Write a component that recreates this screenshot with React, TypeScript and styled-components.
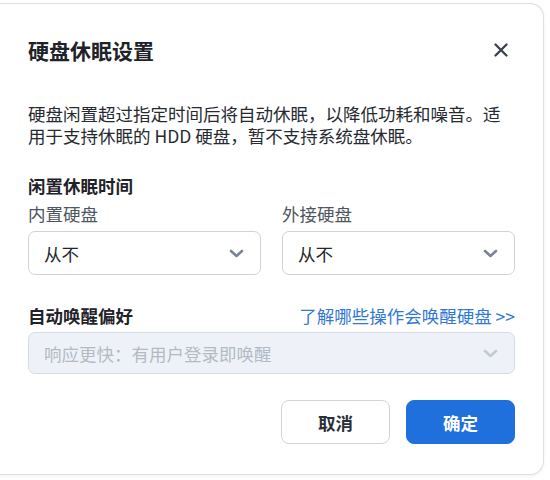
import styled, { createGlobalStyle } from 'styled-components';

const GlobalStyle = createGlobalStyle`
  html, body {
    margin: 0;
    padding: 0;
    background: #ffffff;
  }
  body {
    font-family: "Noto Sans CJK SC", "Noto Sans", "Liberation Sans", sans-serif;
  }
`;

const Page = styled.div`
  width: 550px;
  height: 480px;
  padding-top: 3px;
  box-sizing: border-box;
  overflow: hidden;
`;

const Dialog = styled.section`
  width: 544px;
  height: 472px;
  box-sizing: border-box;
  padding: 32px 28px 30px;
  background: #ffffff;
  border: 1px solid #dddfe3;
  border-left: none;
  border-radius: 0 14px 14px 0;
  box-shadow: 0 1px 4px rgba(0, 0, 0, 0.06);
  display: flex;
  flex-direction: column;
`;

const Header = styled.header`
  display: flex;
  align-items: center;
  justify-content: space-between;
  height: 28px;
`;

const Title = styled.h2`
  margin: 0;
  font-size: 21px;
  line-height: 28px;
  font-weight: 700;
  color: #1f2329;
`;

const CloseButton = styled.button`
  border: none;
  background: none;
  padding: 0;
  margin-right: 6px;
  width: 16px;
  height: 16px;
  display: flex;
  align-items: center;
  justify-content: center;
  cursor: pointer;
`;

const Description = styled.p`
  margin: 39px 0 0;
  font-size: 17.5px;
  line-height: 22px;
  color: #262a30;
`;

const SectionHead = styled.div<{ $gap: number }>`
  margin-top: ${({ $gap }) => $gap}px;
  display: flex;
  align-items: center;
  justify-content: space-between;
  height: 22px;
`;

const SectionLabel = styled.span`
  font-size: 17.5px;
  line-height: 22px;
  font-weight: 700;
  color: #1f2329;
`;

const HelpLink = styled.a`
  font-size: 17.5px;
  line-height: 22px;
  color: #3178d4;
  text-decoration: none;
  cursor: pointer;
`;

const Columns = styled.div`
  margin-top: 6px;
  display: grid;
  grid-template-columns: 1fr 1fr;
  column-gap: 21px;
`;

const Field = styled.div`
  display: flex;
  flex-direction: column;
  gap: 6px;
`;

const FieldLabel = styled.span`
  font-size: 17.5px;
  line-height: 22px;
  color: #4e5560;
`;

const Select = styled.div<{ $disabled?: boolean; $top?: number }>`
  margin-top: ${({ $top }) => $top ?? 0}px;
  height: 44px;
  box-sizing: border-box;
  padding: 0 16px 0 15px;
  display: flex;
  align-items: center;
  justify-content: space-between;
  border: 1px solid ${({ $disabled }) => ($disabled ? '#d6dce5' : '#cdd3dc')};
  border-radius: 7px;
  background: ${({ $disabled }) => ($disabled ? '#eef2f8' : '#ffffff')};
  color: ${({ $disabled }) => ($disabled ? '#b3bac5' : '#23272d')};
  font-size: 17.5px;
  cursor: ${({ $disabled }) => ($disabled ? 'not-allowed' : 'pointer')};
`;

const Footer = styled.footer`
  margin-top: 26px;
  display: flex;
  justify-content: flex-end;
  gap: 16px;
`;

const Button = styled.button<{ $primary?: boolean }>`
  width: 109px;
  height: 44px;
  border-radius: 8px;
  font-family: inherit;
  font-size: 17.5px;
  font-weight: 700;
  cursor: pointer;
  border: 1px solid ${({ $primary }) => ($primary ? '#1f6fdd' : '#cfd5dd')};
  background: ${({ $primary }) => ($primary ? '#1f6fdd' : '#ffffff')};
  color: ${({ $primary }) => ($primary ? '#ffffff' : '#2b3038')};
`;

function Chevron({ color }: { color: string }) {
  return (
    <svg width="15" height="9" viewBox="0 0 15 9" fill="none">
      <polyline
        points="2,2 7.5,7 13,2"
        stroke={color}
        strokeWidth="2.6"
        strokeLinecap="round"
        strokeLinejoin="round"
      />
    </svg>
  );
}

export default function App() {
  return (
    <Page>
      <GlobalStyle />
      <Dialog>
        <Header>
          <Title>硬盘休眠设置</Title>
          <CloseButton aria-label="关闭">
            <svg width="14" height="14" viewBox="0 0 14 14">
              <path d="M1.5 1.5 L12.5 12.5 M12.5 1.5 L1.5 12.5" stroke="#3a414b" strokeWidth="2.3" strokeLinecap="round" />
            </svg>
          </CloseButton>
        </Header>

        <Description>
          硬盘闲置超过指定时间后将自动休眠，以降低功耗和噪音。适用于支持休眠的 HDD 硬盘，暂不支持系统盘休眠。
        </Description>

        <SectionHead $gap={28}>
          <SectionLabel>闲置休眠时间</SectionLabel>
        </SectionHead>
        <Columns>
          <Field>
            <FieldLabel>内置硬盘</FieldLabel>
            <Select>
              从不
              <Chevron color="#7b8494" />
            </Select>
          </Field>
          <Field>
            <FieldLabel>外接硬盘</FieldLabel>
            <Select>
              从不
              <Chevron color="#7b8494" />
            </Select>
          </Field>
        </Columns>

        <SectionHead $gap={30}>
          <SectionLabel>自动唤醒偏好</SectionLabel>
          <HelpLink>了解哪些操作会唤醒硬盘 &gt;&gt;</HelpLink>
        </SectionHead>
        <Select $disabled $top={5}>
          响应更快：有用户登录即唤醒
          <Chevron color="#c3c9d2" />
        </Select>

        <Footer>
          <Button>取消</Button>
          <Button $primary>确定</Button>
        </Footer>
      </Dialog>
    </Page>
  );
}
